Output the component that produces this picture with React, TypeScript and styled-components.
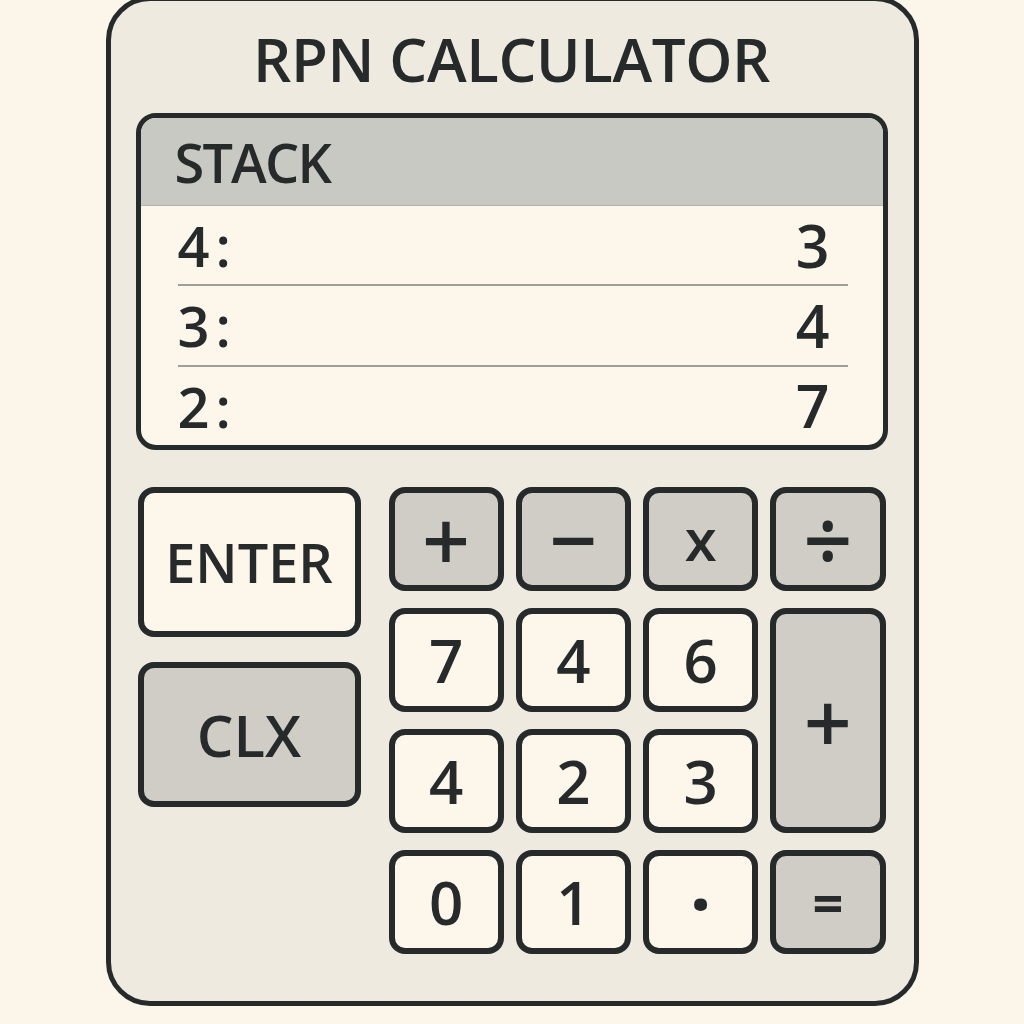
import React from 'react';
import styled, { createGlobalStyle } from 'styled-components';

const ink = '#262a2b';

const GlobalStyle = createGlobalStyle`
  html, body {
    margin: 0;
    background: #fcf6ea;
  }

  body {
    font-family: "Open Sans", "Noto Sans", sans-serif;
    color: ${ink};
    overflow: hidden;
  }
`;

const Calculator = styled.div`
  box-sizing: border-box;
  width: 813px;
  height: 1010px;
  margin: -4px auto 0;
  padding: 0 26px 0 25px;
  border: 5px solid ${ink};
  border-radius: 44px;
  background: #eeeadf;
  display: flex;
  flex-direction: column;
`;

const Title = styled.h1`
  box-sizing: border-box;
  height: 112px;
  margin: 0;
  padding-top: 4px;
  display: flex;
  align-items: center;
  justify-content: center;
  font-size: 60px;
  font-weight: 600;
  letter-spacing: -0.4px;
`;

const StackPanel = styled.section`
  box-sizing: border-box;
  height: 337px;
  border: 5px solid ${ink};
  border-radius: 20px;
  overflow: hidden;
  background: #fdf6ea;
  display: flex;
  flex-direction: column;
`;

const StackHeader = styled.div`
  height: 87px;
  flex-shrink: 0;
  padding-left: 34px;
  background: #c9c9c4;
  border-bottom: 1px solid #b3b3ad;
  display: flex;
  align-items: center;
  font-size: 54px;
  font-weight: 600;
  letter-spacing: -1.8px;
`;

const StackRows = styled.div`
  flex: 1;
  min-height: 0;
  padding: 0 35px 0 37px;
  display: flex;
  flex-direction: column;
`;

const StackRow = styled.div`
  flex: 1 1 0;
  min-height: 0;
  display: flex;
  align-items: center;
  justify-content: space-between;
  font-size: 56px;
  font-weight: 600;
  line-height: 1;

  & + & {
    border-top: 2px solid #9d9d99;
  }
`;

const Level = styled.span`
  letter-spacing: 6px;
`;

const Value = styled.span`
  margin-right: 18px;
  font-size: 59px;
`;

const Keypad = styled.div`
  margin-top: 37px;
  padding: 0 2px;
  display: flex;
  gap: 28px;
`;

const SideKeys = styled.div`
  width: 223px;
  display: flex;
  flex-direction: column;
  gap: 25px;
`;

const KeyGrid = styled.div`
  flex: 1;
  display: grid;
  grid-template-columns: repeat(4, 1fr);
  grid-auto-rows: 104px;
  gap: 17px 12px;
`;

const Key = styled.button<{
  $dark?: boolean;
  $size?: number;
  $weight?: number;
  $height?: number;
  $rows?: number;
}>`
  box-sizing: border-box;
  height: ${({ $height }) => ($height ? `${$height}px` : 'auto')};
  grid-row: ${({ $rows }) => ($rows ? `span ${$rows}` : 'auto')};
  padding: 0;
  border: 6px solid ${ink};
  border-radius: 16px;
  background: ${({ $dark }) => ($dark ? '#cfcdc5' : '#fdf6ea')};
  color: ${ink};
  font-family: inherit;
  font-size: ${({ $size }) => $size || 60}px;
  font-weight: ${({ $weight }) => $weight || 600};
  line-height: 1;
  display: flex;
  align-items: center;
  justify-content: center;
`;

const stack = [
  { level: 4, value: 3 },
  { level: 3, value: 4 },
  { level: 2, value: 7 },
];

function App() {
  return (
    <>
      <GlobalStyle />
      <Calculator>
        <Title>RPN CALCULATOR</Title>
        <StackPanel>
          <StackHeader>STACK</StackHeader>
          <StackRows>
            {stack.map(({ level, value }) => (
              <StackRow key={level}>
                <Level>{level}:</Level>
                <Value>{value}</Value>
              </StackRow>
            ))}
          </StackRows>
        </StackPanel>
        <Keypad>
          <SideKeys>
            <Key $height={150} $size={54}>
              ENTER
            </Key>
            <Key $dark $height={145} $size={58}>
              CLX
            </Key>
          </SideKeys>
          <KeyGrid>
            <Key $dark $size={84}>
              +
            </Key>
            <Key $dark $size={84}>
              −
            </Key>
            <Key $dark $size={58}>
              x
            </Key>
            <Key $dark $size={86}>
              ÷
            </Key>
            <Key>7</Key>
            <Key>4</Key>
            <Key>6</Key>
            <Key $dark $rows={2} $size={84}>
              +
            </Key>
            <Key>4</Key>
            <Key>2</Key>
            <Key>3</Key>
            <Key>0</Key>
            <Key>1</Key>
            <Key $size={76} $weight={700}>
              ·
            </Key>
            <Key $dark $size={54} $weight={700}>
              =
            </Key>
          </KeyGrid>
        </Keypad>
      </Calculator>
    </>
  );
}

export default App;
